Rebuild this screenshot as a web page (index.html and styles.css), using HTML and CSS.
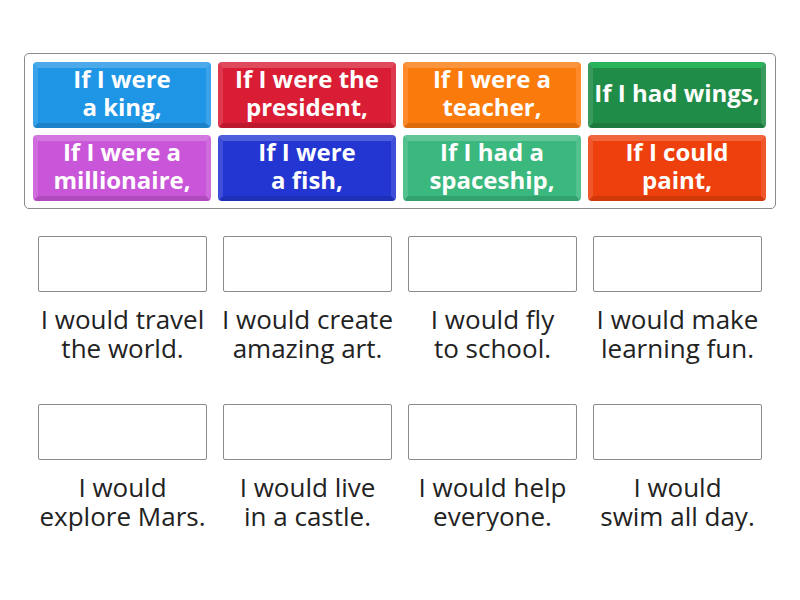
FILE: index.html
```html
<!DOCTYPE html>
<html>
<head>
<meta charset="utf-8">
<link rel="stylesheet" href="styles.css">
</head>
<body>
<div class="bank">
  <div class="tile blue">If I were<br>a king,</div>
  <div class="tile red">If I were the<br>president,</div>
  <div class="tile orange">If I were a<br>teacher,</div>
  <div class="tile green">If I had wings,</div>
  <div class="tile purple">If I were a<br>millionaire,</div>
  <div class="tile navy">If I were<br>a fish,</div>
  <div class="tile teal">If I had a<br>spaceship,</div>
  <div class="tile vermilion">If I could<br>paint,</div>
</div>
<div class="targets">
  <div class="cell"><div class="slot"></div><p class="phrase">I would travel<br>the world.</p></div>
  <div class="cell"><div class="slot"></div><p class="phrase">I would create<br>amazing art.</p></div>
  <div class="cell"><div class="slot"></div><p class="phrase">I would fly<br>to school.</p></div>
  <div class="cell"><div class="slot"></div><p class="phrase">I would make<br>learning fun.</p></div>
  <div class="cell"><div class="slot"></div><p class="phrase">I would<br>explore Mars.</p></div>
  <div class="cell"><div class="slot"></div><p class="phrase">I would live<br>in a castle.</p></div>
  <div class="cell"><div class="slot"></div><p class="phrase">I would help<br>everyone.</p></div>
  <div class="cell"><div class="slot"></div><p class="phrase">I would<br>swim all day.</p></div>
</div>
</body>
</html>
```
FILE: styles.css
```css
html, body {
  margin: 0;
  padding: 0;
  background: #ffffff;
  font-family: "Open Sans", "Noto Sans", sans-serif;
}

.bank {
  margin: 53px 24px 0 24px;
  border: 1px solid #8a8a8a;
  border-radius: 5px;
  padding: 8px 9px 7px 8px;
  display: grid;
  grid-template-columns: repeat(4, 178px);
  grid-auto-rows: 66px;
  gap: 7px;
}

.tile {
  box-sizing: border-box;
  border-radius: 4px;
  border-style: solid;
  border-width: 6px 5px 5px 5px;
  border-color: rgba(255,255,255,0.2) rgba(255,255,255,0.12) rgba(0,0,0,0.12) rgba(255,255,255,0.12);
  padding-bottom: 5px;
  color: #ffffff;
  font-weight: 700;
  font-size: 24px;
  line-height: 28px;
  text-align: center;
  display: flex;
  align-items: center;
  justify-content: center;
  white-space: nowrap;
}

.blue { background-color: #1f95e6; }
.red { background-color: #d81d34; }
.orange { background-color: #fb7a0c; }
.green { background-color: #1f8c48; border-top-color: rgba(60,255,130,0.35); }
.purple { background-color: #c956d8; }
.navy { background-color: #2336d2; }
.teal { background-color: #3bb87d; }
.vermilion { background-color: #ee400c; }

.targets {
  margin: 27px 30px 0 30px;
  display: grid;
  grid-template-columns: repeat(4, 185px);
  row-gap: 41px;
}

.cell {
  display: flex;
  flex-direction: column;
  align-items: center;
}

.slot {
  box-sizing: border-box;
  width: 169px;
  height: 56px;
  border: 1px solid #8a8a8a;
  border-radius: 2px;
  background: #ffffff;
}

.phrase {
  margin: 13px 0 0 0;
  font-size: 26px;
  line-height: 29px;
  color: #222222;
  text-align: center;
  white-space: nowrap;
}
```
